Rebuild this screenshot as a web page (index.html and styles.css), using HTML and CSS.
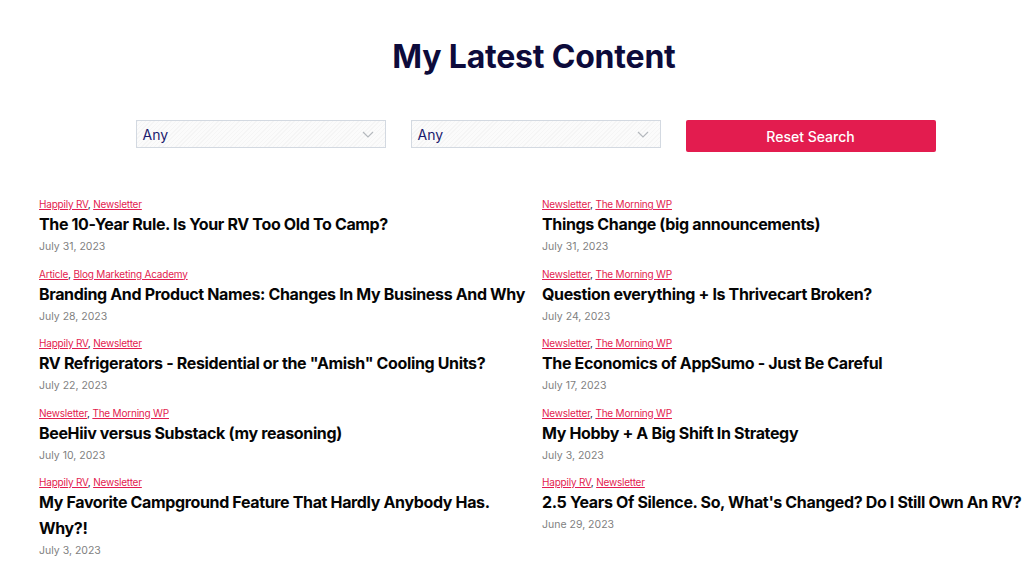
FILE: index.html
```html
<!DOCTYPE html>
<html lang="en">
<head>
<meta charset="utf-8">
<title>My Latest Content</title>
<link rel="stylesheet" href="styles.css">
</head>
<body>
<main class="page">
  <h1 class="page-title">My Latest Content</h1>
  <form class="filters">
    <div class="select">
      <span class="select-value">Any</span>
      <svg class="chevron" width="12" height="7" viewBox="0 0 12 7"><path d="M1 1l5 5 5-5" fill="none" stroke="#b4b8bd" stroke-width="1.2"/></svg>
    </div>
    <div class="select">
      <span class="select-value">Any</span>
      <svg class="chevron" width="12" height="7" viewBox="0 0 12 7"><path d="M1 1l5 5 5-5" fill="none" stroke="#b4b8bd" stroke-width="1.2"/></svg>
    </div>
    <button type="button" class="reset">Reset Search</button>
  </form>
  <section class="posts">
    <div class="col">
      <article class="post">
        <div class="tags"><a href="#">Happily RV</a>, <a href="#">Newsletter</a></div>
        <h2 class="post-title">The 10-Year Rule. Is Your RV Too Old To Camp?</h2>
        <div class="date">July 31, 2023</div>
      </article>
      <article class="post">
        <div class="tags"><a href="#">Article</a>, <a href="#">Blog Marketing Academy</a></div>
        <h2 class="post-title">Branding And Product Names: Changes In My Business And Why</h2>
        <div class="date">July 28, 2023</div>
      </article>
      <article class="post">
        <div class="tags"><a href="#">Happily RV</a>, <a href="#">Newsletter</a></div>
        <h2 class="post-title">RV Refrigerators - Residential or the "Amish" Cooling Units?</h2>
        <div class="date">July 22, 2023</div>
      </article>
      <article class="post">
        <div class="tags"><a href="#">Newsletter</a>, <a href="#">The Morning WP</a></div>
        <h2 class="post-title">BeeHiiv versus Substack (my reasoning)</h2>
        <div class="date">July 10, 2023</div>
      </article>
      <article class="post">
        <div class="tags"><a href="#">Happily RV</a>, <a href="#">Newsletter</a></div>
        <h2 class="post-title">My Favorite Campground Feature That Hardly Anybody Has. Why?!</h2>
        <div class="date">July 3, 2023</div>
      </article>
    </div>
    <div class="col">
      <article class="post">
        <div class="tags"><a href="#">Newsletter</a>, <a href="#">The Morning WP</a></div>
        <h2 class="post-title">Things Change (big announcements)</h2>
        <div class="date">July 31, 2023</div>
      </article>
      <article class="post">
        <div class="tags"><a href="#">Newsletter</a>, <a href="#">The Morning WP</a></div>
        <h2 class="post-title">Question everything + Is Thrivecart Broken?</h2>
        <div class="date">July 24, 2023</div>
      </article>
      <article class="post">
        <div class="tags"><a href="#">Newsletter</a>, <a href="#">The Morning WP</a></div>
        <h2 class="post-title">The Economics of AppSumo - Just Be Careful</h2>
        <div class="date">July 17, 2023</div>
      </article>
      <article class="post">
        <div class="tags"><a href="#">Newsletter</a>, <a href="#">The Morning WP</a></div>
        <h2 class="post-title">My Hobby + A Big Shift In Strategy</h2>
        <div class="date">July 3, 2023</div>
      </article>
      <article class="post">
        <div class="tags"><a href="#">Happily RV</a>, <a href="#">Newsletter</a></div>
        <h2 class="post-title">2.5 Years Of Silence. So, What's Changed? Do I Still Own An RV?</h2>
        <div class="date">June 29, 2023</div>
      </article>
    </div>
  </section>
</main>
</body>
</html>
```
FILE: styles.css
```css
html, body {
  margin: 0;
  padding: 0;
  background: #ffffff;
  overflow: hidden;
}
body {
  font-family: Inter, "Noto Sans", Arial, sans-serif;
  color: #0b0b2e;
}
.page {
  width: 990px;
  margin-left: 39px;
  padding-top: 38px;
}
.page-title {
  margin: 0;
  text-align: center;
  font-size: 32px;
  line-height: 38px;
  font-weight: 700;
  color: #0d0b3b;
  letter-spacing: -0.2px;
}
.filters {
  display: flex;
  justify-content: center;
  gap: 25px;
  margin-top: 44px;
  padding-left: 3px;
  align-items: flex-start;
}
.select {
  box-sizing: border-box;
  width: 250px;
  height: 28px;
  border: 1px solid #d3d9e1;
  background-color: #f9f9f9;
  background-image: repeating-linear-gradient(135deg, #f5f5f5 0 1px, #fbfbfb 1px 3px);
  display: flex;
  align-items: center;
  justify-content: space-between;
  padding: 0 11px 0 6px;
  font-size: 14px;
  color: #1a1a6e;
}
.reset {
  box-sizing: border-box;
  width: 250px;
  height: 32px;
  border: none;
  border-radius: 2px;
  background: #e31c4f;
  color: #ffffff;
  font-family: inherit;
  font-size: 14px;
  font-weight: 500;
}
.posts {
  display: grid;
  grid-template-columns: 490px 490px;
  column-gap: 13px;
  margin-top: 45px;
}
.post {
  margin-bottom: 11.5px;
}
.tags {
  font-size: 10px;
  line-height: 14px;
  color: #0d0b3b;
  letter-spacing: -0.2px;
}
.tags a {
  color: #e31c4f;
  text-decoration: underline;
}
.post-title {
  margin: 0;
  font-size: 16px;
  line-height: 26px;
  font-weight: 700;
  color: #050505;
  letter-spacing: -0.35px;
}
.date {
  margin-top: 2px;
  font-size: 10.5px;
  line-height: 16px;
  color: #7f7f7f;
}
```
